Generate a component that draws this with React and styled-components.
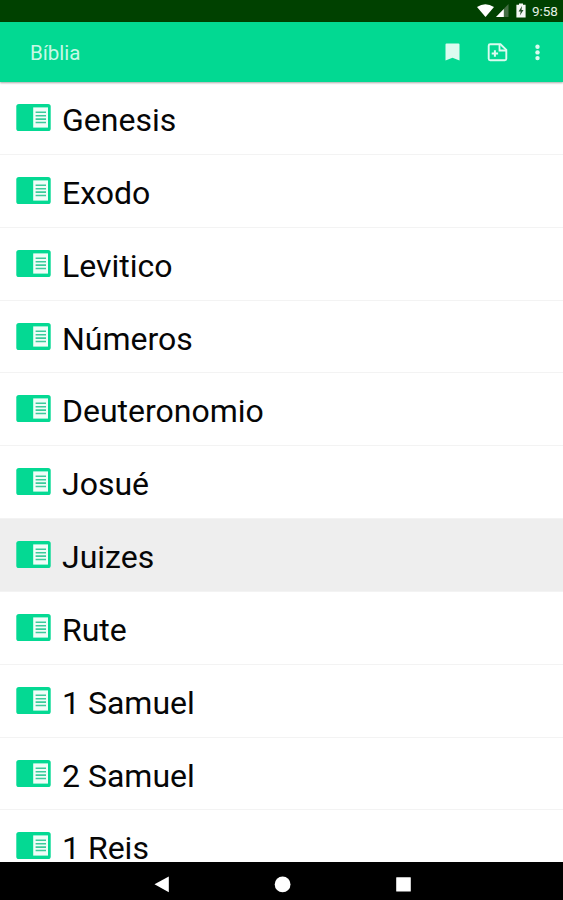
import React from 'react';
import styled, { createGlobalStyle } from 'styled-components';

const GlobalStyle = createGlobalStyle`
  * { box-sizing: border-box; }
  body { margin: 0; background: #fff; font-family: Roboto, sans-serif; }
`;

const Screen = styled.div`
  display: flex;
  flex-direction: column;
  width: 563px;
  height: 900px;
  overflow: hidden;
`;

const StatusBar = styled.div`
  flex: none;
  display: flex;
  justify-content: flex-end;
  height: 22px;
  background: #004100;
  color: #e6f0e6;
`;

const StatusIcons = styled.svg`
  flex: none;
  width: 56px;
  height: 22px;
`;

const Clock = styled.span`
  width: 31px;
  font-size: 13.5px;
  font-weight: 400;
  line-height: 22px;
  letter-spacing: -0.1px;
  white-space: nowrap;
`;

const AppBar = styled.header`
  flex: none;
  z-index: 1;
  display: flex;
  align-items: center;
  height: 60px;
  padding: 0 16px 0 30px;
  background: #02d992;
  box-shadow: 0 1px 2px rgba(0, 0, 0, 0.35);
`;

const Title = styled.h1`
  flex: 1;
  margin: 2px 0 0;
  font-size: 20.5px;
  font-weight: 400;
  color: #c8f8e6;
`;

const Actions = styled.svg`
  width: 107px;
  height: 60px;
`;

const BookList = styled.ul`
  flex: 1;
  min-height: 0;
  overflow: hidden;
  margin: 0;
  padding: 0;
  list-style: none;
  background: #fff;
`;

const BookRow = styled.li`
  display: flex;
  align-items: flex-start;
  height: 72.85px;
  padding: 21px 16px 0;
  border-bottom: 1px solid #f3f3f3;
  background: ${({ $pressed }) => ($pressed ? '#eeeeee' : '#fff')};
`;

const BookIcon = styled.svg`
  flex: none;
  width: 35px;
  height: 29px;
  margin-right: 11px;
`;

const BookName = styled.span`
  margin-top: -2px;
  font-size: 32px;
  line-height: 38px;
  color: #060606;
`;

const NavBar = styled.nav`
  flex: none;
  height: 38px;
  background: #000;
`;

const NavIcons = styled.svg`
  display: block;
  width: 563px;
  height: 38px;
`;

const books = [
  'Genesis', 'Exodo', 'Levitico', 'Números', 'Deuteronomio', 'Josué',
  'Juizes', 'Rute', '1 Samuel', '2 Samuel', '1 Reis',
];

function ReaderIcon() {
  return (
    <BookIcon viewBox="0 0 35 29">
      <rect x="0.3" y="1" width="34.4" height="27" rx="2.6" fill="#04d993" />
      <rect x="17.2" y="4.4" width="14.8" height="20.2" fill="#f0fdf8" />
      <path
        d="M19.6 9.3h10.4M19.6 12.7h10.4M19.6 16.1h10.4M19.6 19.500h10.4"
        stroke="#3bcb9b"
        strokeWidth="1.600"
      />
    </BookIcon>
  );
}

export default function App() {
  return (
    <Screen>
      <GlobalStyle />
      <StatusBar>
        <StatusIcons viewBox="476 0 56 22">
          <path d="M477 7Q485.300 1.500 494 7L485.500 17Z" fill="#fff" />
          <path d="M508.500 4V17H496Z" fill="#446e44" />
          <path d="M503.800 9V17H496Z" fill="#fff" />
          <path d="M519 3.400h4v1.400h2.600v12.600h-9.200V4.800h2.600Z" fill="#f4f7f4" />
          <path d="M522 6L518.600 11.600H520.700L519.900 15.600L523.500 9.900H521.500Z" fill="#27512a" />
        </StatusIcons>
        <Clock>9:58</Clock>
      </StatusBar>
      <AppBar>
        <Title>Bíblia</Title>
        <Actions viewBox="440 22 107 60" fill="#dcfbf0">
          <path d="M446.500 43.600h12a1 1 0 0 1 1 1v16l-7-2.800-7 2.800V44.600a1 1 0 0 1 1-1Z" />
          <path d="M490.200 44.300h10.300l5.800 5.500v8.900a1.500 1.500 0 0 1-1.500 1.500H490.200a1.500 1.500 0 0 1-1.500-1.500V45.800a1.500 1.500 0 0 1 1.500-1.500Z" fill="none" stroke="#dcfbf0" strokeWidth="1.900" />
          <path d="M499.500 44.500v6h6.500" fill="none" stroke="#dcfbf0" strokeWidth="1.800" />
          <path d="M494.900 50.300v6.400M491.700 53.500h6.400" stroke="#dcfbf0" strokeWidth="2" />
          <circle cx="537.500" cy="46.700" r="2.200" />
          <circle cx="537.500" cy="52.400" r="2.200" />
          <circle cx="537.500" cy="58.100" r="2.200" />
        </Actions>
      </AppBar>
      <BookList>
        {books.map((name) => (
          <BookRow key={name} $pressed={name === 'Juizes'}>
            <ReaderIcon />
            <BookName>{name}</BookName>
          </BookRow>
        ))}
      </BookList>
      <NavBar>
        <NavIcons viewBox="0 862 563 38" fill="#fff">
          <path d="M154.500 884.300L168.800 876.500V892.200Z" />
          <circle cx="282.600" cy="884.400" r="7.900" />
          <rect x="396.200" y="877.200" width="14.600" height="14.400" rx="0.500" />
        </NavIcons>
      </NavBar>
    </Screen>
  );
}
